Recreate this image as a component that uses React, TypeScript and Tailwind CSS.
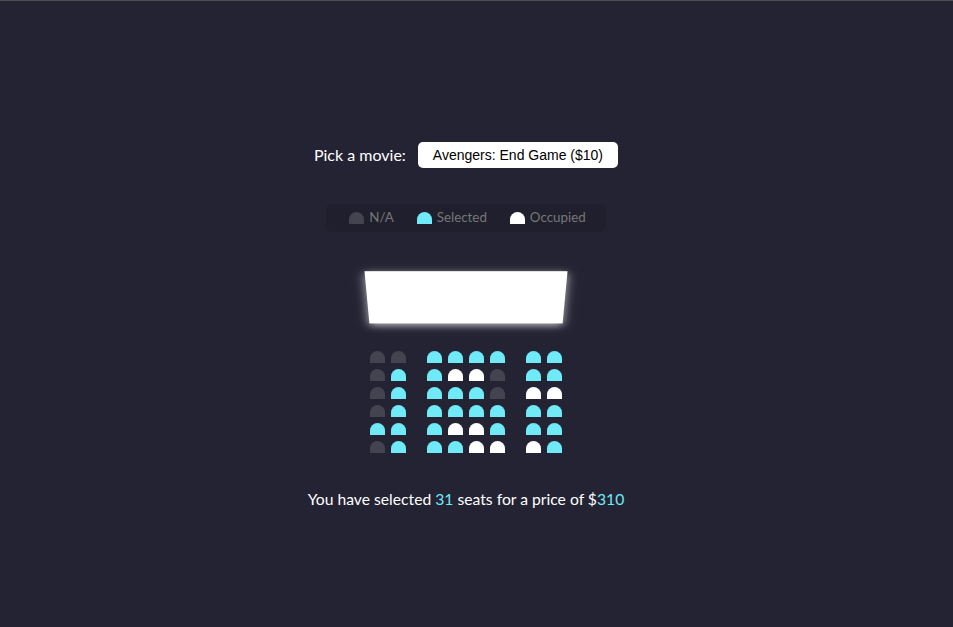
import React from 'react';

type Seat = 'n' | 's' | 'o';

const rows: Seat[][] = [
  ['n', 'n', 's', 's', 's', 's', 's', 's'],
  ['n', 's', 's', 'o', 'o', 'n', 's', 's'],
  ['n', 's', 's', 's', 's', 'n', 'o', 'o'],
  ['n', 's', 's', 's', 's', 's', 's', 's'],
  ['s', 's', 's', 'o', 'o', 's', 's', 's'],
  ['n', 's', 's', 's', 'o', 'o', 'o', 's'],
];

const seatColor: Record<Seat, string> = {
  n: 'bg-[#444451]',
  s: 'bg-[#6feaf6]',
  o: 'bg-white',
};

function SeatBox({ kind, className = '' }: { kind: Seat; className?: string }) {
  return <div className={`h-[12px] w-[15px] rounded-t-[10px] ${seatColor[kind]} ${className}`} />;
}

export default function App() {
  return (
    <div
      className="flex h-screen flex-col items-center justify-center border-t border-[#4d4d4d] bg-[#242333] pt-[11px] pr-[21px] text-white"
      style={{ fontFamily: 'Lato, "Open Sans", sans-serif' }}
    >
      {/* Movie picker */}
      <div className="my-5 flex items-center text-base">
        <label>Pick a movie:</label>
        <div
          className="ml-[12px] rounded-[5px] bg-white px-[15px] py-[5px] text-[14px] leading-[16px] text-black"
          style={{ fontFamily: '"Liberation Sans", Arial, sans-serif' }}
        >
          Avengers: End Game ($10)
        </div>
      </div>

      {/* Legend */}
      <ul className="mt-[16px] flex justify-between rounded-[5px] bg-black/10 px-[10px] py-[4px] text-[#777]">
        <li className="mx-[10px] flex items-center">
          <SeatBox kind="n" className="m-[3px]" />
          <small className="ml-[2px] text-[13.33px]">N/A</small>
        </li>
        <li className="mx-[10px] flex items-center">
          <SeatBox kind="s" className="m-[3px]" />
          <small className="ml-[2px] text-[13.33px]">Selected</small>
        </li>
        <li className="mx-[10px] flex items-center">
          <SeatBox kind="o" className="m-[3px]" />
          <small className="ml-[2px] text-[13.33px]">Occupied</small>
        </li>
      </ul>

      {/* Screen + seats */}
      <div className="mt-[16px] mb-[27px] [perspective:1000px]">
        <div className="my-[15px] h-[70px] w-full bg-white shadow-[0_3px_10px_rgba(255,255,255,0.7)] [transform:rotateX(-45deg)]" />
        {rows.map((row, r) => (
          <div key={r} className="flex">
            {row.map((kind, i) => (
              <SeatBox
                key={i}
                kind={kind}
                className={`my-[3px] ${i === 1 ? 'ml-[3px] mr-[18px]' : i === 6 ? 'ml-[18px] mr-[3px]' : 'mx-[3px]'}`}
              />
            ))}
          </div>
        ))}
      </div>

      <p className="my-[5px] text-[15.7px]">
        You have selected <span className="text-[#6feaf6]">31</span> seats for a price of $
        <span className="text-[#6feaf6]">310</span>
      </p>
    </div>
  );
}
